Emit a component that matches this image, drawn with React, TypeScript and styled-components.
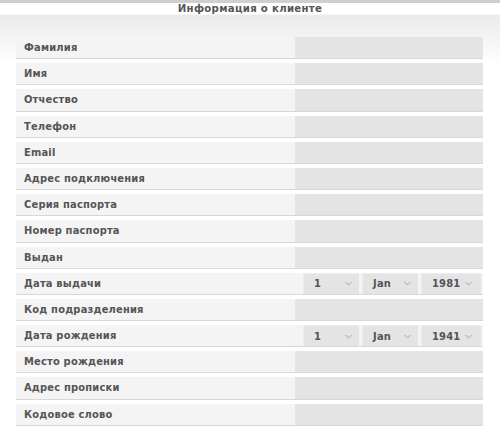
import React from 'react';
import styled, { createGlobalStyle } from 'styled-components';

const GlobalStyle = createGlobalStyle`
  html, body {
    margin: 0;
    padding: 0;
    background: #ffffff;
  }
  body {
    font-family: 'DejaVu Sans Condensed', 'DejaVu Sans', Verdana, sans-serif;
  }
`;

type Field = { label: string; date?: [string, string, string] };

const fields: Field[] = [
  { label: 'Фамилия' },
  { label: 'Имя' },
  { label: 'Отчество' },
  { label: 'Телефон' },
  { label: 'Email' },
  { label: 'Адрес подключения' },
  { label: 'Серия паспорта' },
  { label: 'Номер паспорта' },
  { label: 'Выдан' },
  { label: 'Дата выдачи', date: ['1', 'Jan', '1981'] },
  { label: 'Код подразделения' },
  { label: 'Дата рождения', date: ['1', 'Jan', '1941'] },
  { label: 'Место рождения' },
  { label: 'Адрес прописки' },
  { label: 'Кодовое слово' },
];

function Chevron() {
  return (
    <svg width='7' height='5' viewBox='0 0 7 5'>
      <path d='M0.5 1 L3.5 4 L6.5 1' fill='none' stroke='#a4a4a4' strokeWidth='1' />
    </svg>
  );
}

export default function App(): JSX.Element {
  return (
    <>
      <GlobalStyle />
      <Page>
        <TopBar />
        <Title>Информация о клиенте</Title>
        <Panel>
          {fields.map(f => (
            <Row key={f.label}>
              <Label>{f.label}</Label>
              {f.date ? (
                <DateGroup>
                  {f.date.map((v, i) => (
                    <Select key={i}>
                      <span>{v}</span>
                      <Chevron />
                    </Select>
                  ))}
                </DateGroup>
              ) : (
                <Input />
              )}
            </Row>
          ))}
        </Panel>
      </Page>
    </>
  );
}

const Page = styled.div`
  width: 500px;
  height: 436px;
  overflow: hidden;
  display: flex;
  flex-direction: column;
`;

const TopBar = styled.div`
  height: 3px;
  background: #cfcfcf;
`;

const Title = styled.div`
  height: 11px;
  line-height: 11px;
  font-size: 11.3px;
  font-weight: bold;
  letter-spacing: 0.3px;
  color: #555555;
  text-align: center;
  border-bottom: 1px solid #f7f7f7;
`;

const Panel = styled.div`
  flex: 1;
  padding: 22px 17px 0 16px;
  background: linear-gradient(to bottom, #ebebeb 0px, #ffffff 50px, #ffffff 100%);
  display: flex;
  flex-direction: column;
  gap: 4px;
`;

const Row = styled.div`
  display: flex;
  height: 21.2px;
  background: #f4f4f4;
  border-bottom: 1px solid #d8d8d8;
`;

const Label = styled.div`
  width: 279px;
  padding-left: 8px;
  box-sizing: border-box;
  font-size: 11px;
  font-weight: bold;
  letter-spacing: 0.2px;
  color: #555555;
  line-height: 21px;
`;

const Input = styled.div`
  flex: 1;
  background: #e4e4e4;
`;

const DateGroup = styled.div`
  flex: 1;
  display: flex;
  gap: 3px;
  padding-left: 8px;
`;

const Select = styled.div`
  width: 56px;
  box-sizing: border-box;
  display: flex;
  align-items: center;
  justify-content: space-between;
  padding: 0 7px 0 10px;
  background: #e4e4e4;
  border-left: 1px solid #ececec;
  border-top: 1px solid #ececec;
  font-size: 11px;
  font-weight: bold;
  letter-spacing: 0.2px;
  color: #555555;

  &:last-child {
    width: 60px;
    padding-right: 9px;
  }
`;
